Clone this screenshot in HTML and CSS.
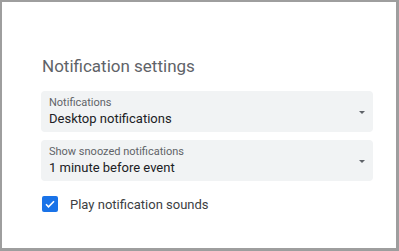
FILE: index.html
```html
<!DOCTYPE html>
<html lang="en">
<head>
  <meta charset="UTF-8">
  <meta name="viewport" content="width=device-width, initial-scale=1.0">
  <title>Notification settings</title>
  <link rel="stylesheet" href="styles.css">
</head>
<body>
  <div class="frame">
    <h2 class="title">Notification settings</h2>

    <div class="select-field">
      <div class="select-text">
        <span class="select-label">Notifications</span>
        <span class="select-value">Desktop notifications</span>
      </div>
      <span class="select-arrow"></span>
    </div>

    <div class="select-field">
      <div class="select-text">
        <span class="select-label">Show snoozed notifications</span>
        <span class="select-value">1 minute before event</span>
      </div>
      <span class="select-arrow"></span>
    </div>

    <label class="check-row">
      <span class="checkbox">
        <svg width="12" height="12" viewBox="0 0 24 24">
          <path d="M4 12.5l5 5L20 6.5" fill="none" stroke="#fff" stroke-width="3.2"/>
        </svg>
      </span>
      <span class="check-label">Play notification sounds</span>
    </label>
  </div>
</body>
</html>
```

FILE: styles.css
```css
/* Page frame */
body {
  margin: 0;
  font-family: Roboto, 'Liberation Sans', sans-serif;
  background: #ffffff;
}

.frame {
  box-sizing: border-box;
  width: 399px;
  height: 251px;
  border-style: solid;
  border-color: #9e9e9e;
  border-width: 2px 3px 3px 2px;
  padding: 0 23px 0 39px;
  display: flex;
  flex-direction: column;
}

.title {
  margin: 52px 0 13px 1px;
  font-size: 17px;
  line-height: 24px;
  font-weight: 400;
  color: #5f6368;
}

/* Select fields */
.select-field {
  display: flex;
  align-items: center;
  justify-content: space-between;
  background-color: #f1f3f4;
  border-radius: 4px;
  padding: 5px 8px 4px 8px;
  margin-bottom: 8px;
}

.select-text {
  display: flex;
  flex-direction: column;
}

.select-label {
  font-size: 11px;
  line-height: 14px;
  color: #5f6368;
}

.select-value {
  font-size: 13px;
  line-height: 18px;
  color: #202124;
}

.select-arrow {
  width: 0;
  height: 0;
  border-left: 3px solid transparent;
  border-right: 3px solid transparent;
  border-top: 3px solid #5f6368;
  margin-top: 1px;
}

/* Checkbox row */
.check-row {
  display: flex;
  align-items: center;
  gap: 12px;
  margin: 7px 0 0 1px;
}

.checkbox {
  width: 16px;
  height: 16px;
  border-radius: 2px;
  background-color: #1a73e8;
  display: flex;
  justify-content: center;
  align-items: center;
}

.check-label {
  font-size: 13px;
  color: #3c4043;
}
```
